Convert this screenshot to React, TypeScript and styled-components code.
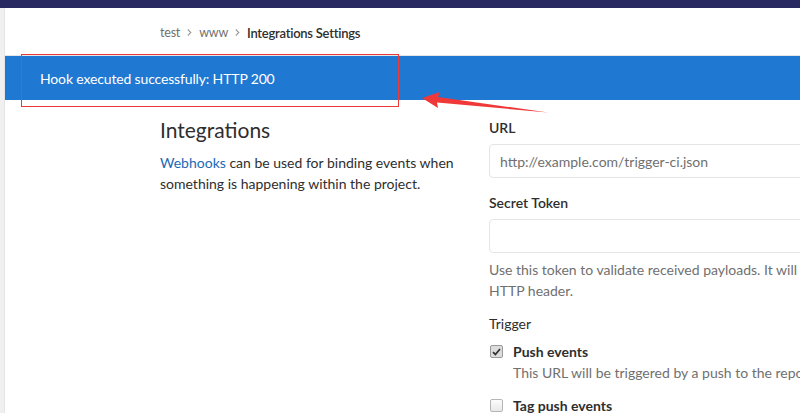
import React from "react";
import styled, { createGlobalStyle } from "styled-components";

const Global = createGlobalStyle`
  html, body { margin: 0; padding: 0; background: #fff; overflow: hidden; }
  body { font-family: "Lato", "Liberation Sans", sans-serif; color: #2e2e2e; -webkit-font-smoothing: antialiased; }
  * { box-sizing: border-box; }
`;

const Page = styled.div`
  position: relative;
  width: 800px;
  height: 413px;
  overflow: hidden;
  display: flex;
  flex-direction: column;
`;

const TopBar = styled.header`
  height: 8px;
  background: #292961;
  flex: none;
`;

const Body = styled.div`
  flex: 1;
  display: flex;
`;

const SideStrip = styled.aside`
  width: 5px;
  flex: none;
  background: #f0f0f0;
  border-right: 1px solid #e4e4e4;
`;

const Main = styled.main`
  flex: 1;
  display: flex;
  flex-direction: column;
  min-width: 0;
`;

const Breadcrumbs = styled.nav`
  height: 48px;
  flex: none;
  display: flex;
  align-items: center;
  padding: 2px 0 0 155px;
  gap: 7px;
  font-size: 12.5px;
  border-bottom: 1px solid #e5e5e5;
`;

const Crumb = styled.span<{ $current?: boolean }>`
  color: ${(p) => (p.$current ? "#2e2e2e" : "#707070")};
  font-weight: ${(p) => (p.$current ? 600 : 400)};
  font-size: ${(p) => (p.$current ? "13px" : "12.5px")};
  letter-spacing: ${(p) => (p.$current ? "-0.25px" : "-0.2px")};
`;

const Chevron = () => (
  <svg width="5" height="9" viewBox="0 0 5 9">
    <path d="M0.8 1.5 L3.8 4.5 L0.8 7.5" fill="none" stroke="#9a9a9a" strokeWidth="1.1" />
  </svg>
);

const Flash = styled.div`
  height: 44px;
  flex: none;
  background: #1f78d1;
  color: #fff;
  font-size: 14px;
  letter-spacing: -0.15px;
  display: flex;
  align-items: center;
  padding-left: 35px;
`;

const Content = styled.section`
  display: grid;
  grid-template-columns: 329px 600px;
  padding-left: 155px;
`;

const Intro = styled.div`
  padding-top: 17px;
`;

const Heading = styled.h4`
  margin: 0 0 10px;
  font-size: 21px;
  line-height: 25px;
  font-weight: 400;
  color: #2e2e2e;
`;

const Para = styled.p`
  margin: 0;
  font-size: 14px;
  line-height: 21px;
  color: #2e2e2e;
`;

const Link = styled.a`
  color: #1b69b6;
  text-decoration: none;
`;

const Form = styled.div`
  padding-top: 18px;
  display: flex;
  flex-direction: column;
`;

const Label = styled.label<{ $gap?: number }>`
  display: block;
  font-size: 14px;
  line-height: 20px;
  font-weight: 600;
  color: #2e2e2e;
  margin-top: ${(p) => p.$gap ?? 0}px;
  margin-bottom: 6px;
`;

const Input = styled.div`
  height: 34px;
  border: 1px solid #e5e5e5;
  border-radius: 4px;
  padding: 0 10px;
  display: flex;
  align-items: center;
  font-size: 14px;
  color: #707070;
`;

const Help = styled.p`
  margin: 6px 0 0;
  font-size: 14px;
  line-height: 21px;
  color: #707070;
`;

const SubLabel = styled.div`
  margin-top: 13px;
  font-size: 14px;
  line-height: 20px;
  color: #2e2e2e;
`;

const CheckRow = styled.div<{ $gap: number }>`
  margin-top: ${(p) => p.$gap}px;
  display: grid;
  grid-template-columns: 24px 1fr;
  align-items: start;
`;

const Box = styled.span<{ $checked?: boolean }>`
  width: 13px;
  height: 13px;
  margin: 3px 0 0 1px;
  border: 1px solid ${(p) => (p.$checked ? "#9a9a9a" : "#b5b5b5")};
  border-radius: 2px;
  background: ${(p) => (p.$checked ? "#dcdcdc" : "linear-gradient(#fcfcfc, #e8e8e8)")};
  display: flex;
  align-items: center;
  justify-content: center;
`;

const CheckTitle = styled.div`
  font-size: 14px;
  line-height: 20px;
  font-weight: 700;
  color: #2e2e2e;
`;

const CheckDesc = styled.div`
  font-size: 14px;
  line-height: 21px;
  color: #707070;
`;

const Annotation = styled.div`
  position: absolute;
  left: 21px;
  top: 54px;
  width: 378px;
  height: 53px;
  border: 1px solid #ec3a3a;
  pointer-events: none;
`;

const ArrowLayer = styled.svg`
  position: absolute;
  left: 0;
  top: 0;
  pointer-events: none;
`;

export default function App() {
  return (
    <Page>
      <Global />
      <TopBar />
      <Body>
        <SideStrip />
        <Main>
          <Breadcrumbs>
            <Crumb>test</Crumb>
            <Chevron />
            <Crumb>www</Crumb>
            <Chevron />
            <Crumb $current>Integrations Settings</Crumb>
          </Breadcrumbs>
          <Flash>Hook executed successfully: HTTP 200</Flash>
          <Content>
            <Intro>
              <Heading>Integrations</Heading>
              <Para>
                <Link href="#">Webhooks</Link> can be used for binding events when
                <br />
                something is happening within the project.
              </Para>
            </Intro>
            <Form>
              <Label>URL</Label>
              <Input>http://example.com/trigger-ci.json</Input>
              <Label $gap={15}>Secret Token</Label>
              <Input />
              <Help>
                Use this token to validate received payloads. It will
                <br />
                HTTP header.
              </Help>
              <SubLabel>Trigger</SubLabel>
              <CheckRow $gap={8}>
                <Box $checked>
                  <svg width="9" height="8" viewBox="0 0 9 8">
                    <path d="M1 4.2 L3.4 6.5 L8 1" fill="none" stroke="#333" strokeWidth="1.8" />
                  </svg>
                </Box>
                <div>
                  <CheckTitle>Push events</CheckTitle>
                  <CheckDesc>This URL will be triggered by a push to the repo</CheckDesc>
                </div>
              </CheckRow>
              <CheckRow $gap={13}>
                <Box />
                <div>
                  <CheckTitle>Tag push events</CheckTitle>
                </div>
              </CheckRow>
            </Form>
          </Content>
        </Main>
      </Body>
      <Annotation />
      <ArrowLayer width="800" height="413" viewBox="0 0 800 413">
        <polygon
          points="422,98 440,92 438,97 548,112.5 437,102.5 438,108"
          fill="#f03838"
        />
      </ArrowLayer>
    </Page>
  );
}
